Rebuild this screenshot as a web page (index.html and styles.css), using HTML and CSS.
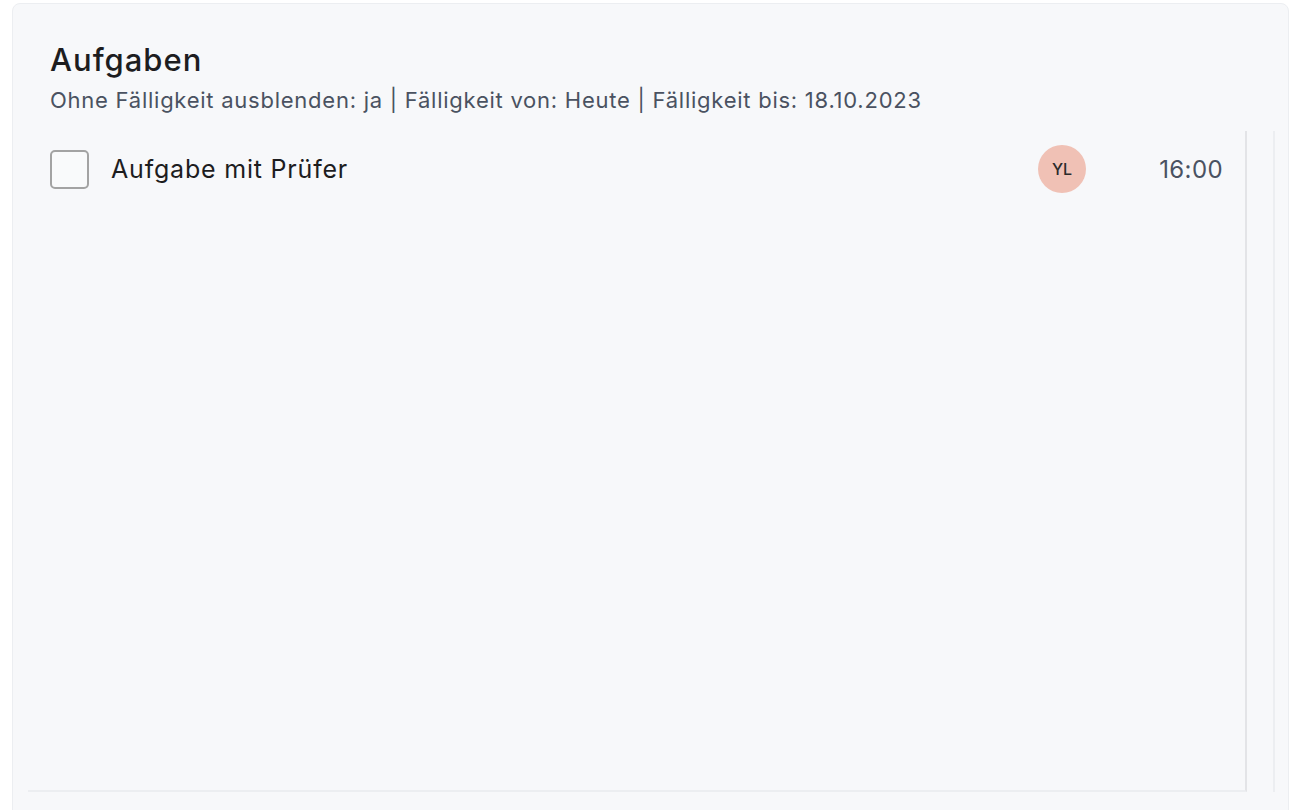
FILE: index.html
```html
<!DOCTYPE html>
<html lang="de">
<head>
    <meta charset="UTF-8">
    <meta name="viewport" content="width=device-width, initial-scale=1.0">
    <title>Aufgaben</title>
    <link rel="stylesheet" href="styles.css">
</head>

<body>
    <div class="card">
        <!-- Kopfbereich mit Filterangaben -->
        <div class="cardHeader">
            <h1 class="cardTitle">Aufgaben</h1>
            <p class="cardFilter">Ohne Fälligkeit ausblenden: ja | Fälligkeit von: Heute | Fälligkeit bis: 18.10.2023</p>
        </div>

        <div class="cardBody">
            <div class="taskList">
                <div class="taskRow">
                    <span class="taskCheck"></span>
                    <span class="taskName">Aufgabe mit Prüfer</span>
                    <span class="taskAvatar">YL</span>
                    <span class="taskTime">16:00</span>
                </div>
            </div>
            <div class="taskSide"></div>
        </div>
    </div>
</body>
</html>
```

FILE: styles.css
```css
html, body {
    margin: 0;
    background: #ffffff;
}

body {
    padding: 3px 11px 0 12px;
    font-family: Inter, "Noto Sans", sans-serif;
    height: 810px;
    overflow: hidden;
    box-sizing: border-box;
}

.card {
    background: #f7f8fa;
    border: 1px solid #eceef1;
    border-radius: 8px;
    height: 830px;
    box-sizing: border-box;
    padding: 0 13px 0 15px;
}

.cardHeader {
    padding: 37px 0 0 22px;
    height: 127px;
    box-sizing: border-box;
}

.cardTitle {
    margin: 0;
    font-size: 31px;
    font-weight: 500;
    line-height: 38px;
    color: #1d1d1f;
    letter-spacing: 1px;
}

.cardFilter {
    margin: 7px 0 0 0;
    font-size: 22px;
    line-height: 28px;
    color: #4a5261;
    letter-spacing: 0.75px;
}

.cardBody {
    display: flex;
    height: 661px;
}

.taskList {
    flex: 1;
    border-right: 2px solid #e3e4e7;
    border-bottom: 2px solid #eceef1;
    padding: 18px 22px 0 22px;
}

.taskSide {
    width: 26px;
    border-right: 2px solid #eceef1;
}

.taskRow {
    display: flex;
    align-items: center;
    height: 40px;
}

.taskCheck {
    width: 39px;
    height: 39px;
    box-sizing: border-box;
    border: 2px solid #a3a3a3;
    border-radius: 5px;
    background: #f9fafb;
}

.taskName {
    flex: 1;
    margin-left: 22px;
    font-size: 25px;
    color: #1d1d1f;
    letter-spacing: 0.8px;
}

.taskAvatar {
    width: 48px;
    height: 48px;
    border-radius: 50%;
    background: #f0c1b5;
    color: #2b2b2b;
    font-size: 16px;
    font-weight: 500;
    display: flex;
    align-items: center;
    justify-content: center;
}

.taskTime {
    width: 137px;
    text-align: right;
    font-size: 24px;
    color: #4a5261;
    letter-spacing: 0.4px;
}
```
